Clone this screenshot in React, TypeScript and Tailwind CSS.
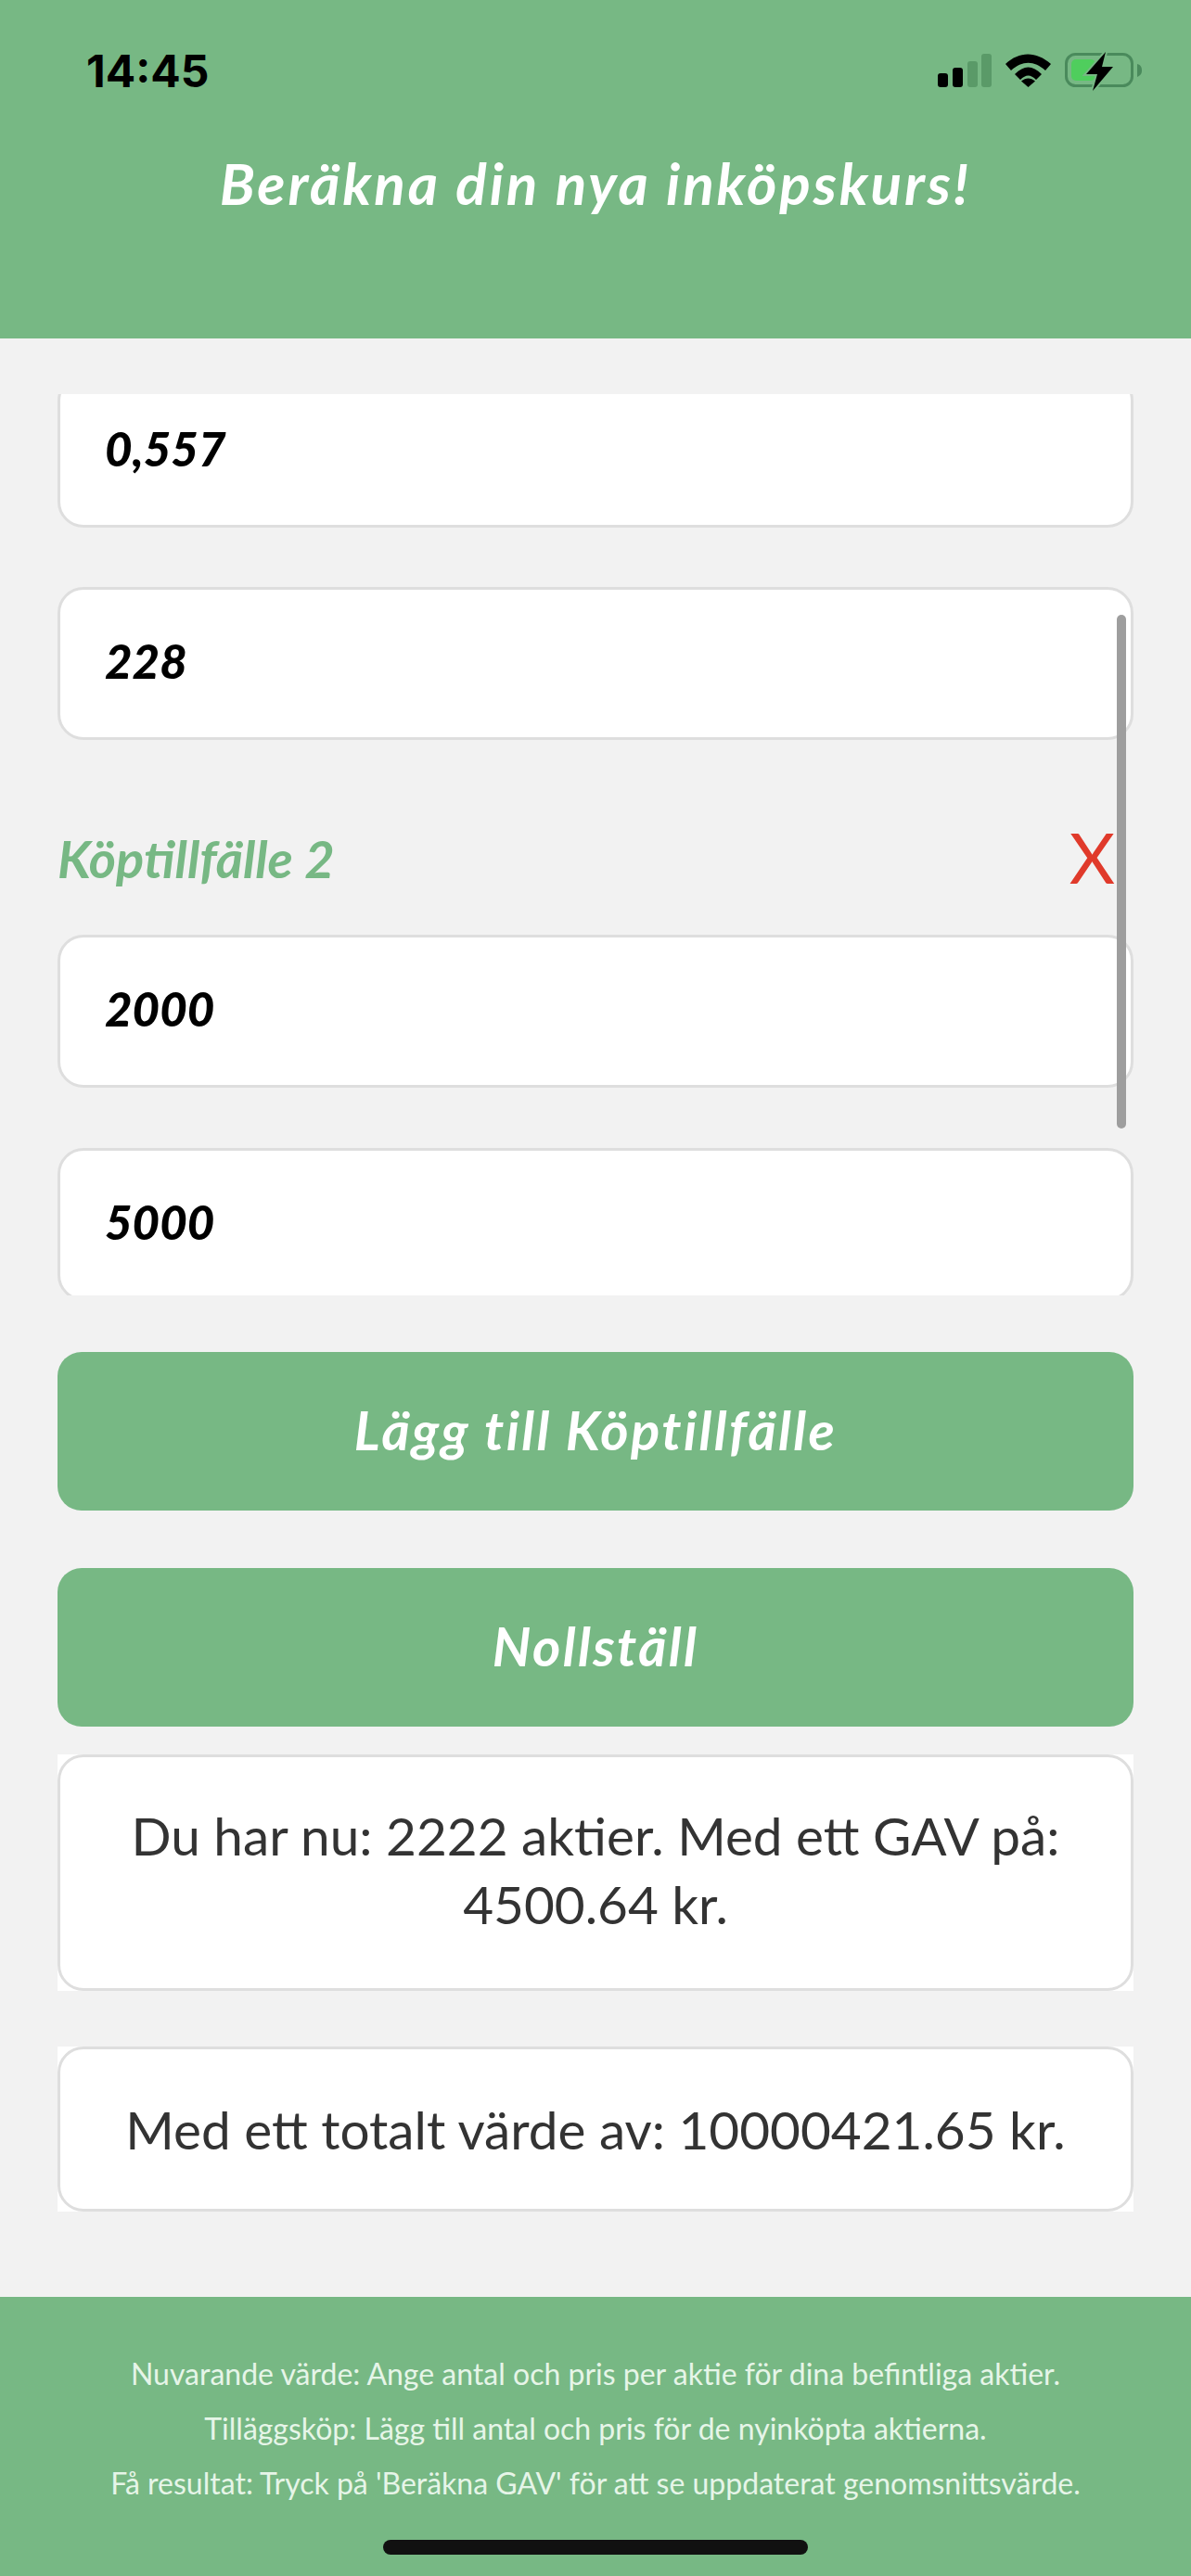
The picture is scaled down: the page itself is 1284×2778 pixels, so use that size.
import React from "react";

const FONT = "font-['Lato','Liberation_Sans',sans-serif]";

function Field({ value, className = "" }: { value: string; className?: string }) {
  return (
    <div className={`flex h-[165px] shrink-0 items-center rounded-[28px] border-[3px] border-[#dedede] bg-white pl-[48px] text-[51px] font-black italic leading-none text-black ${className}`}>
      <span className="mt-[-6px]">{value}</span>
    </div>
  );
}

function ActionButton({ label }: { label: string }) {
  return (
    <div className="flex h-[171px] items-center justify-center rounded-[26px] bg-[#77b884] text-[58px] font-bold italic leading-none tracking-[2.4px] text-white">
      <span className="mt-[-4px]">{label}</span>
    </div>
  );
}

function Result({ lines, className }: { lines: string[]; className: string }) {
  return (
    <div className="bg-white">
      <div className={`flex flex-col justify-center rounded-[28px] border-[3px] border-[#dedede] text-center text-[56.700px] leading-[74px] text-[#333333] ${className}`}>
        {lines.map((l) => (
          <div key={l}>{l}</div>
        ))}
      </div>
    </div>
  );
}

function StatusIcons() {
  return (
    <svg width="224" height="44" viewBox="0 0 224 44" className="block">
      <rect x="0" y="23" width="11" height="15" rx="3" fill="#000" />
      <rect x="16" y="17" width="11" height="21" rx="3" fill="#000" />
      <rect x="32" y="10" width="11" height="28" rx="3" fill="#5a9a68" />
      <rect x="47" y="2" width="11" height="36" rx="3" fill="#5a9a68" />
      <path d="M73 13 C88 -1 106 -1 122 13 L116 20 C104 9 91 9 79 20 Z" fill="#000" />
      <path d="M83 24 C93 14 102 14 112 24 L106 30 C100 24 95 24 89 30 Z" fill="#000" />
      <path d="M97.500 38 L90 31.500 C95 27.500 100 27.500 105 31.500 Z" fill="#000" />
      <rect x="138.500" y="2.500" width="71" height="34" rx="10" fill="none" stroke="#4a8a5c" strokeWidth="3" />
      <rect x="144" y="8" width="26" height="23" rx="5" fill="#4fce5d" />
      <path d="M215 13 C219 14 220 17 220 20 C220 23 219 25 215 27 Z" fill="#4a8a5c" />
      <path d="M181 0 L160 24 L172 24 L167 42 L189 16 L177 16 Z" fill="#000" stroke="#77b884" strokeWidth="4" paintOrder="stroke" />
    </svg>
  );
}

export default function App() {
  return (
    <div className={`flex h-[2778px] w-[1284px] flex-col overflow-hidden bg-[#f2f2f2] ${FONT}`}>
      <header className="h-[365px] shrink-0 bg-[#77b884] text-center">
        <div className="flex h-[150px] items-start justify-between pl-[93px] pr-[49px] pt-[49px]">
          <span className="font-['Inter',sans-serif] text-[48px] font-bold leading-[56px] text-black">14:45</span>
          <div className="pt-[7px]">
            <StatusIcons />
          </div>
        </div>
        <h1 className="mt-[12px] text-[62px] font-bold italic leading-[70px] tracking-[2.9px] text-white">Beräkna din nya inköpskurs!</h1>
      </header>

      <main className="flex flex-1 flex-col px-[62px] pt-[60px]">
        <div className="relative h-[972px] shrink-0">
          <div className="h-full overflow-hidden">
            <div className="flex flex-col">
              <Field value="0,557" className="mt-[-21px]" />
              <Field value="228" className="mt-[64px]" />
              <div className="mt-[88px] flex h-[122px] items-start justify-between">
                <span className="mt-[12px] text-[56px] font-bold italic leading-[56px] text-[#77b884]">Köptillfälle 2</span>
                <span className="mr-[20px] text-[76px] leading-[76px] text-[#e03a2b]">X</span>
              </div>
              <Field value="2000" />
              <Field value="5000" className="mt-[65px]" />
            </div>
          </div>
          <div className="absolute right-[8px] top-[238px] h-[554px] w-[10px] rounded-full bg-[#9e9e9e]" />
        </div>

        <div className="mt-[61px]">
          <ActionButton label="Lägg till Köptillfälle" />
        </div>
        <div className="mt-[62px]">
          <ActionButton label="Nollställ" />
        </div>
        <div className="mt-[30px]">
          <Result className="h-[255px] pb-[8px]" lines={["Du har nu: 2222 aktier. Med ett GAV på:", "4500.64 kr."]} />
        </div>
        <div className="mt-[60px]">
          <Result className="h-[178px]" lines={["Med ett totalt värde av: 10000421.65 kr."]} />
        </div>
      </main>

      <footer className="flex h-[301px] shrink-0 flex-col items-center bg-[#77b884] pt-[53px] text-center text-[32px] leading-[59px] text-[#e6f5e8]">
        <p>Nuvarande värde: Ange antal och pris per aktie för dina befintliga aktier.</p>
        <p>Tilläggsköp: Lägg till antal och pris för de nyinköpta aktierna.</p>
        <p>Få resultat: Tryck på 'Beräkna GAV' för att se uppdaterat genomsnittsvärde.</p>
        <div className="mt-[32px] h-[16px] w-[458px] rounded-full bg-[#111111]" />
      </footer>
    </div>
  );
}
